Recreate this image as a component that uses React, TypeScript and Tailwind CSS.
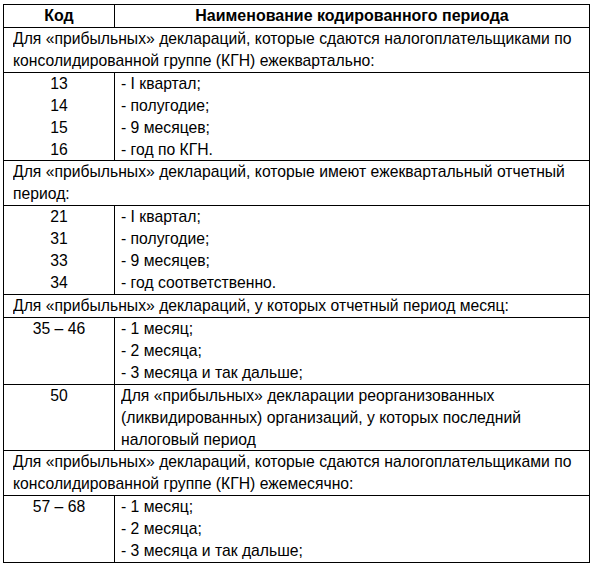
import * as React from "react"

type Row =
  | { kind: "section"; lines: string[] }
  | { kind: "codes"; codes: string[]; items: string[] }

const rows: Row[] = [
  {
    kind: "section",
    lines: [
      "Для «прибыльных» деклараций, которые сдаются налогоплательщиками по",
      "консолидированной группе (КГН) ежеквартально:",
    ],
  },
  {
    kind: "codes",
    codes: ["13", "14", "15", "16"],
    items: ["- I квартал;", "- полугодие;", "- 9 месяцев;", "- год по КГН."],
  },
  {
    kind: "section",
    lines: [
      "Для «прибыльных» деклараций, которые имеют ежеквартальный отчетный",
      "период:",
    ],
  },
  {
    kind: "codes",
    codes: ["21", "31", "33", "34"],
    items: ["- I квартал;", "- полугодие;", "- 9 месяцев;", "- год соответственно."],
  },
  {
    kind: "section",
    lines: ["Для «прибыльных» деклараций, у которых отчетный период месяц:"],
  },
  {
    kind: "codes",
    codes: ["35 – 46"],
    items: ["- 1 месяц;", "- 2 месяца;", "- 3 месяца и так дальше;"],
  },
  {
    kind: "codes",
    codes: ["50"],
    items: [
      "Для «прибыльных» декларации реорганизованных",
      "(ликвидированных) организаций, у которых последний",
      "налоговый период",
    ],
  },
  {
    kind: "section",
    lines: [
      "Для «прибыльных» деклараций, которые сдаются налогоплательщиками по",
      "консолидированной группе (КГН) ежемесячно:",
    ],
  },
  {
    kind: "codes",
    codes: ["57 – 68"],
    items: ["- 1 месяц;", "- 2 месяца;", "- 3 месяца и так дальше;"],
  },
]

// narrow face: Liberation Sans squeezed to the condensed look of the original
function Line({ children, center }: { children: React.ReactNode; center?: boolean }) {
  return (
    <div
      className={
        center
          ? "whitespace-nowrap origin-center scale-x-[0.925]"
          : "whitespace-nowrap origin-left scale-x-[0.925]"
      }
    >
      {children}
    </div>
  )
}

function Head({ children }: { children: React.ReactNode }) {
  return (
    <th className="border border-black font-bold text-center p-0">
      <div className="whitespace-nowrap origin-center scale-x-[0.94]">{children}</div>
    </th>
  )
}

export default function App() {
  return (
    <div className="bg-white w-[592px] h-[564px] pl-[3px] pt-[4px] text-black font-['Liberation_Sans',Arial,sans-serif] text-[17px] leading-[21.92px]">
      <table className="border-collapse w-[587px] table-fixed">
        <colgroup>
          <col className="w-[111px]" />
          <col />
        </colgroup>
        <thead>
          <tr>
            <Head>Код</Head>
            <Head>Наименование кодированного периода</Head>
          </tr>
        </thead>
        <tbody>
          {rows.map((row, i) =>
            row.kind === "section" ? (
              <tr key={i}>
                <td colSpan={2} className="border border-black p-0 pl-[9px] align-top">
                  {row.lines.map((l, j) => (
                    <Line key={j}>{l}</Line>
                  ))}
                </td>
              </tr>
            ) : (
              <tr key={i}>
                <td className="border border-black p-0 text-center align-top">
                  {row.codes.map((c, j) => (
                    <Line key={j} center>
                      {c}
                    </Line>
                  ))}
                </td>
                <td className="border border-black p-0 pl-[6px] align-top">
                  {row.items.map((t, j) => (
                    <Line key={j}>{t}</Line>
                  ))}
                </td>
              </tr>
            )
          )}
        </tbody>
      </table>
    </div>
  )
}
